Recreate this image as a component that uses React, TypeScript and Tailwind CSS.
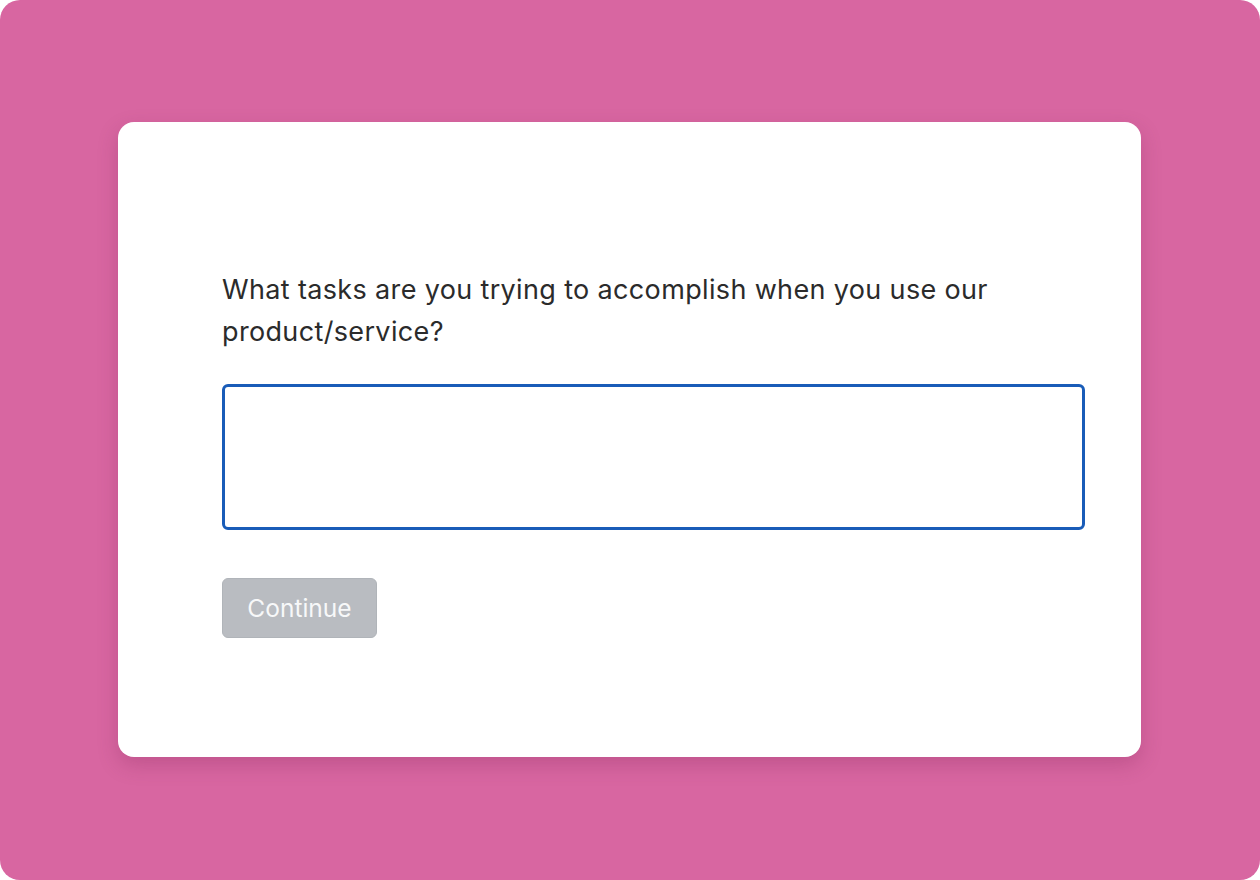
export default function App() {
  return (
    <div className="w-[1260px] h-[880px] bg-white">
      <div
        className="w-full h-full bg-[#d866a1] rounded-[20px] pt-[122px] pl-[118px]"
        style={{ fontFamily: "Inter, 'Noto Sans', sans-serif" }}
      >
        <div className="w-[1023px] h-[635px] bg-white rounded-[16px] shadow-[0_8px_20px_rgba(120,30,80,0.25)] pl-[104px] pr-[56px] pt-[147px]">
          <p className="text-[27px] leading-[42px] text-[#2b2b2b] tracking-[0.35px]">
            What tasks are you trying to accomplish when you use our
            <br />
            product/service?
          </p>
          <textarea className="mt-[31px] block w-[863px] h-[146px] border-[3px] border-[#195cb8] rounded-[6px] resize-none outline-none" />
          <button className="mt-[48px] w-[155px] h-[60px] rounded-[6px] bg-[#b9bcc1] border border-[#b0b4b9] text-[#f7f8f9] text-[24.5px]">
            Continue
          </button>
        </div>
      </div>
    </div>
  );
}
